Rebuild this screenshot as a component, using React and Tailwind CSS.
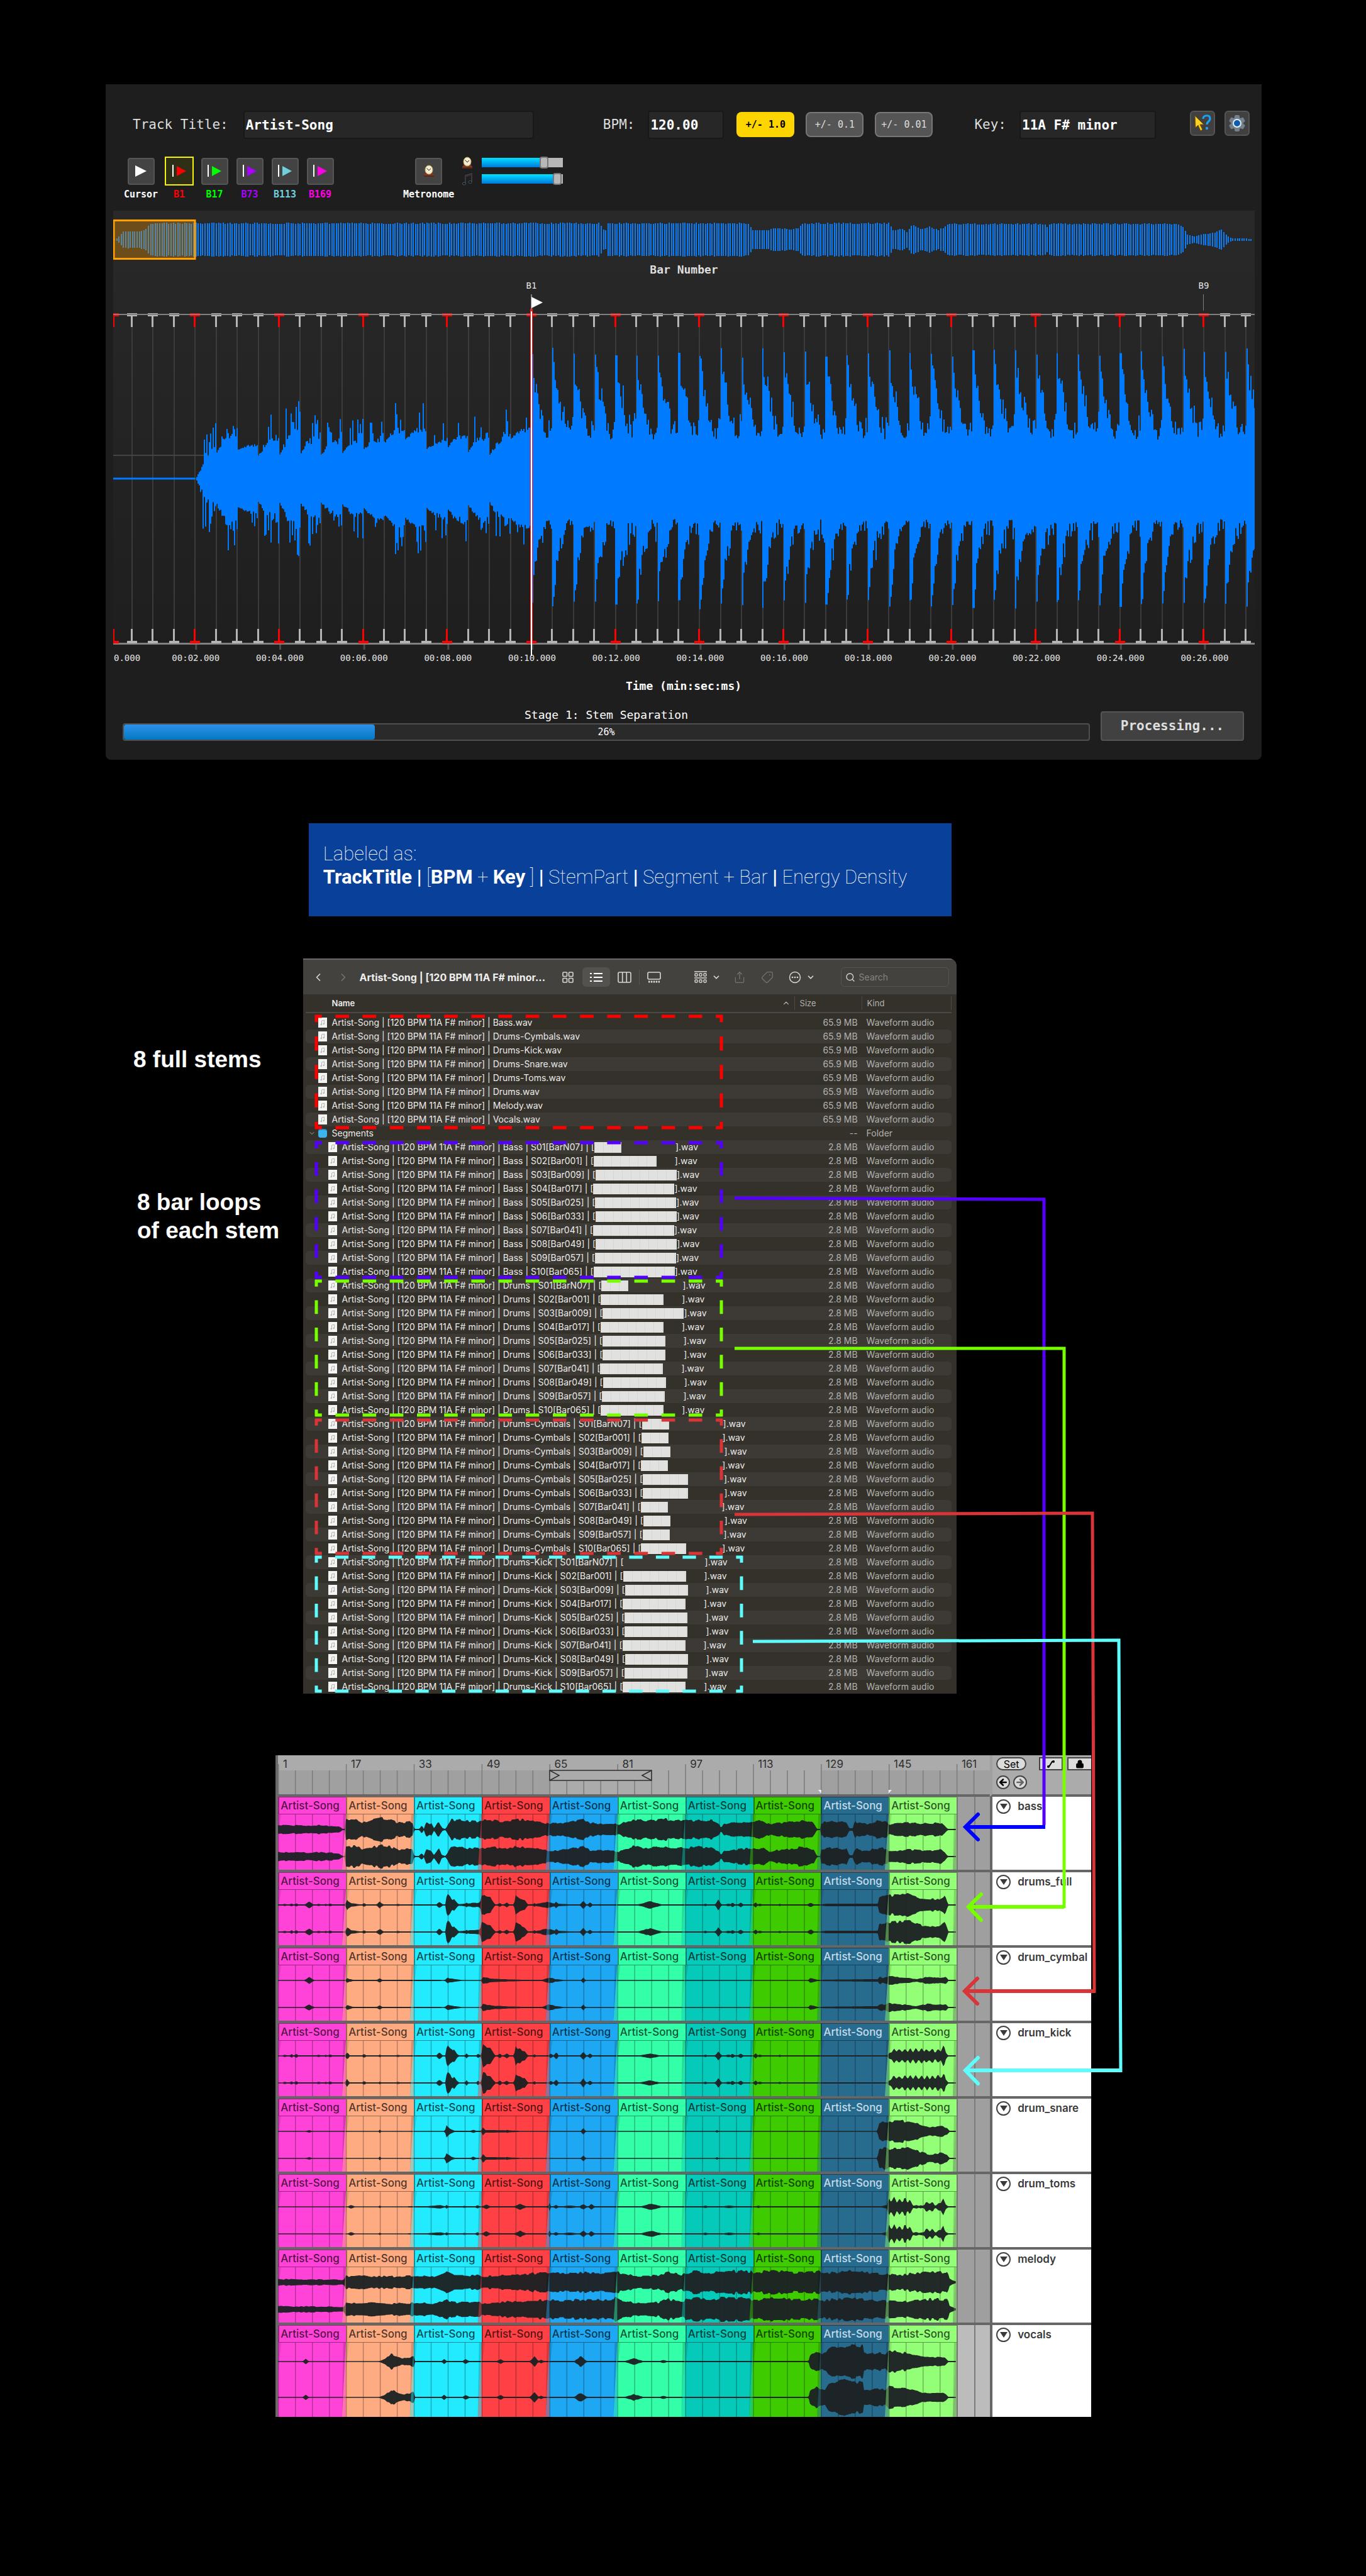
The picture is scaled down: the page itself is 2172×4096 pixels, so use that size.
import { ChevronLeft, ChevronRight, ChevronDown, ChevronUp, Search, Share, Tag, Lock, ArrowLeft, ArrowRight } from "lucide-react";

// Deterministic noise in 0..1 so the drawn waveforms never change between renders
const noise = (i) => {
  const v = Math.sin(i * 12.9898 + 4.1) * 43758.5453;
  return v - Math.floor(v);
};

const interpolate = (points, x) => {
  if (x <= points[0][0]) return points[0][1];
  for (let i = 1; i < points.length; i++) {
    const [x1, y1] = points[i];
    if (x <= x1) {
      const [x0, y0] = points[i - 1];
      return y0 + ((y1 - y0) * (x - x0)) / (x1 - x0);
    }
  }
  return points[points.length - 1][1];
};

const markers = [
  { label: "B1", box: "border-2 border-[#f5f500] bg-[#2f2e17] size-[46px]", text: "text-[#ff0000]", color: "#ff0000" },
  { label: "B17", box: "border-2 border-[#555] bg-[#434343] rounded size-[43px]", text: "text-[#00ff00]", color: "#00ff00" },
  { label: "B73", box: "border-2 border-[#555] bg-[#434343] rounded size-[43px]", text: "text-[#aa00ff]", color: "#aa00ff" },
  { label: "B113", box: "border-2 border-[#555] bg-[#434343] rounded size-[43px]", text: "text-[#6fd0dc]", color: "#6fd0dc" },
  { label: "B169", box: "border-2 border-[#555] bg-[#434343] rounded size-[43px]", text: "text-[#ff00e6]", color: "#ff00e6" },
];

/* ---------- Player ---------- */

function ClockIcon({ className }) {
  return (
    <svg viewBox="0 0 18 20" className={className} aria-hidden="true">
      <path d="M1 19v-3l2-2V8a6 6 0 0 1 12 0v6l2 2v3z" fill="#7a3b26" />
      <rect x="1" y="17" width="16" height="2" fill="#5a2718" />
      <ellipse cx="9" cy="8" rx="6" ry="7" fill="#f4ecd0" stroke="#c9a25a" strokeWidth="1" />
      <path d="M5.500 5.500 9 9l3-3" fill="none" stroke="#222" strokeWidth="1" />
    </svg>
  );
}

function NoteIcon({ className }) {
  return (
    <svg viewBox="0 0 18 20" className={className} aria-hidden="true">
      <path d="M6 17V4l10-3v13" fill="none" stroke="#3f474d" strokeWidth="1.500" />
      <path d="M6 6l10-3" stroke="#4a2b2b" strokeWidth="1.500" />
      <ellipse cx="4" cy="17" rx="2.600" ry="2" fill="#10161b" stroke="#4d5963" />
      <ellipse cx="13.500" cy="14.500" rx="2.600" ry="2" fill="#10161b" stroke="#4d5963" />
    </svg>
  );
}

function Volume({ label, value, icon }) {
  return (
    <label className="flex items-center gap-3.5 h-[15px]">
      {icon}
      <input
        type="range"
        aria-label={label}
        defaultValue={value}
        style={{ backgroundSize: `${value}% 100%` }}
        className="appearance-none w-[129px] h-[15px] bg-[#b7b7b7] bg-[linear-gradient(#00e1ff,#0078dc)] bg-no-repeat [&::-webkit-slider-thumb]:appearance-none [&::-webkit-slider-thumb]:w-3.5 [&::-webkit-slider-thumb]:h-[19px] [&::-webkit-slider-thumb]:rounded-sm [&::-webkit-slider-thumb]:border-2 [&::-webkit-slider-thumb]:border-[#777] [&::-webkit-slider-thumb]:bg-[#b8b8b8]"
      />
    </label>
  );
}

const OVERVIEW_ENVELOPE = [
  [0, 1], [6, 2], [10, 8], [16, 14], [36, 13], [50, 17], [54, 18], [56, 27], [774, 27], [777, 18],
  [782, 15], [785, 27], [1008, 27], [1016, 16], [1040, 15], [1048, 19], [1080, 17], [1090, 20], [1094, 27],
  [1232, 27], [1240, 15], [1252, 18], [1262, 13], [1270, 26], [1284, 16], [1296, 22], [1310, 16], [1324, 22],
  [1327, 26], [1480, 26], [1484, 20], [1488, 26], [1692, 26], [1700, 22], [1706, 9], [1718, 5], [1730, 9],
  [1745, 10], [1762, 17], [1770, 6], [1778, 2], [1815, 1.5],
];

function Overview() {
  const bars = [];
  for (let x = 1; x < 1810; x += 3.6) {
    const a = interpolate(OVERVIEW_ENVELOPE, x) * (1 - 0.08 * noise(x));
    bars.push(`M${Math.round(x)} ${(32 - a).toFixed(1)}h2v${(a * 2).toFixed(1)}h-2z`);
  }
  return (
    <svg viewBox="0 0 1815 64" className="block w-full h-auto">
      <path d={bars.join("")} fill="#0a7cf5" shapeRendering="crispEdges" />
      <rect x="1" y="1.500" width="129" height="61" fill="#ffa000" fillOpacity="0.32" stroke="#ffa000" strokeWidth="3" />
    </svg>
  );
}

const BEAT = 33.42;
const CURSOR_X = 664;
const INTRO = [
  [2, 83], [38, 120], [45, 75], [36, 95], [36, 113], [38, 100], [38, 87], [40, 88],
  [46, 90], [56, 113], [62, 113], [46, 88], [48, 100], [42, 100], [36, 104], [62, 113],
];
// Shape of one drum hit over a beat, as a share of its peak above the sustained level
const HIT = [
  [[0, 1], [0.06, 0.95], [0.12, 0.8], [0.27, 0.62], [0.4, 0.36], [0.6, 0.13], [0.8, 0.05], [1, 0.18]],
  [[0, 1], [0.06, 0.95], [0.14, 0.76], [0.27, 0.5], [0.4, 0.28], [0.6, 0.1], [0.8, 0.04], [1, 0.08]],
];

function buildWave(side) {
  const points = [];
  for (let x = 0; x <= 1815; x += 2) {
    const beat = (x - CURSOR_X) / BEAT;
    const n = noise(x + side * 977);
    let a;
    if (beat < -16) {
      a = 1.5;
    } else if (beat < 0) {
      const k = Math.floor(beat) + 16;
      const t = beat + 16 - k;
      const [low, high] = INTRO[k];
      a = low + (high * 0.74 - low) * Math.sin(Math.min(1, t * 1.2) * 1.57) * (0.55 + 0.6 * n);
      if (n > 0.74 && t > 0.3) a = high * (0.74 + 0.36 * noise(x * 3));
      if (k === 0) a *= Math.min(1, 0.1 + t * 2.2);
    } else {
      const k = Math.floor(beat);
      const t = beat - k;
      const peak = 192 + 16 * noise(k * 7 + side);
      const base = side ? 60 : 56;
      a = base + (peak - base) * interpolate(HIT[side], t) * (0.74 + 0.36 * n);
      a += (t > 0.35 ? 34 : 0) * n * n * (0.4 + 0.8 * noise(k + 3));
      if (t < 0.07) a = peak;
    }
    points.push({ x, y: (side ? 322 + a : 322 - a).toFixed(1) });
  }
  return `M0 322${points.map((p) => `V${p.y}H${p.x + 2}`).join("")}V322Z`;
}

function WavePlot() {
  const beats = [];
  for (let k = -20; k <= 34; k++) beats.push(k);

  return (
    <svg viewBox="0 0 1815 620" className="block w-full h-auto">
      {beats.map((k) => (
        <rect key={k} x={Math.round(CURSOR_X + k * BEAT)} y="81" width="2" height="480" fill="#3b3b3b" />
      ))}
      <rect x="0" y="284" width="1815" height="2" fill="#444" />
      <path d={buildWave(0)} fill="#007aff" />
      <path d={buildWave(1)} fill="#007aff" />
      <rect x="0" y="60" width="1815" height="2" fill="#808080" />
      <rect x="0" y="583" width="1815" height="3" fill="#808080" />
      {beats.map((k) => {
        const x = Math.max(0, Math.round(CURSOR_X + k * BEAT));
        const fill = k % 4 === 0 ? "#ff0000" : "#b4b4b4";
        return (
          <g key={k} fill={fill}>
            <rect x={x - 7} y="59" width="16" height="1" />
            <rect x={x - 7} y="62" width="16" height="2" />
            <rect x={x - 1} y="62" width="3" height="19" />
            <rect x={x - 1} y="561" width="3" height="21" />
            <rect x={x - 7} y="580" width="16" height="4" />
          </g>
        );
      })}
      {[-16, -12, -8, -4, 0, 4, 8, 12, 16, 20, 24, 28, 32].map((k) => (
        <g key={k}>
          <rect x={CURSOR_X + k * BEAT + 1} y="586" width="3" height="8" fill="#4a4a4a" />
          <text x={CURSOR_X + k * BEAT + 2} y="612" textAnchor="middle" fontSize="14" fill="#e4e4e4">
            {`00:${String(10 + k / 2).padStart(2, "0")}.000`}
          </text>
        </g>
      ))}
      <text x="1" y="612" fontSize="14" fill="#e4e4e4">0.000</text>
      <text x="665" y="20" textAnchor="middle" fontSize="14" fill="#e4e4e4">B1</text>
      <text x="1734" y="20" textAnchor="middle" fontSize="14" fill="#e4e4e4">B9</text>
      <rect x="664" y="29" width="2" height="26" fill="#808080" />
      <rect x="1733" y="29" width="1" height="26" fill="#808080" />
      <path d="M665 33l18 9-18 9z" fill="#fff" />
      <rect x="663" y="52" width="4" height="532" fill="#ff2020" />
      <rect x="664" y="56" width="2" height="548" fill="#fff" />
    </svg>
  );
}

function Player() {
  return (
    <section className="ml-[168px] mr-[166px] bg-[#1e1e1e] rounded-b-lg pt-[42px] pb-[30px] font-['DejaVu_Sans_Mono',monospace]">
      <div className="flex items-start pl-[43px] pr-[19px] text-[21px] text-[#dedede]">
        <label htmlFor="title" className="leading-[45px]">Track Title:</label>
        <input id="title" defaultValue="Artist-Song" className="ml-6 flex-1 min-w-0 h-[45px] pl-0.5 rounded bg-[#272727] border-2 border-[#181818] text-white font-bold" />
        <label htmlFor="bpm" className="ml-[110px] leading-[45px]">BPM:</label>
        <input id="bpm" defaultValue="120.00" className="ml-[21px] w-[121px] h-[45px] pl-0.5 rounded bg-[#272727] border-2 border-[#181818] text-white font-bold" />
        <div className="ml-5 mt-0.5 flex gap-[18px] text-[15px]">
          <button className="w-[92px] h-10 rounded-lg bg-[#ffd500] text-black font-bold">+/- 1.0</button>
          <button className="w-[92px] h-10 rounded-lg bg-[#555] border-2 border-[#777]">+/- 0.1</button>
          <button className="w-[92px] h-10 rounded-lg bg-[#555] border-2 border-[#777]">+/- 0.01</button>
        </div>
        <label htmlFor="key" className="ml-[66px] leading-[45px]">Key:</label>
        <input id="key" defaultValue="11A F# minor" className="ml-[21px] w-[217px] h-[45px] pl-0.5 rounded bg-[#272727] border-2 border-[#181818] text-white font-bold" />
        <button aria-label="Help" className="ml-[54px] size-10 rounded-md bg-[#404040] border-2 border-[#555] flex items-center justify-center">
          <svg viewBox="0 0 30 30" className="size-[30px]">
            <path d="M3 3l1 19 4-4 4 9 3-2-4-8 6 0z" fill="#ffd21f" stroke="#7a5200" strokeWidth="1" />
            <path d="M16 8c0-7 12-7 11 0 0 4-5 4-5 9" fill="none" stroke="#1aa0f5" strokeWidth="3.200" />
            <circle cx="22" cy="23" r="2.200" fill="#1aa0f5" />
          </svg>
        </button>
        <button aria-label="Settings" className="ml-[15px] size-10 rounded-md bg-[#404040] border-2 border-[#555] flex items-center justify-center">
          <svg viewBox="0 0 28 28" className="size-7">
            {[0, 60, 120].map((deg) => (
              <rect key={deg} x="10" y="1" width="8" height="26" rx="2" fill="#74828d" transform={`rotate(${deg} 14 14)`} />
            ))}
            <circle cx="14" cy="14" r="10" fill="#74828d" />
            <circle cx="14" cy="14" r="6" fill="#0e5cab" stroke="#e8eef2" strokeWidth="2" />
          </svg>
        </button>
      </div>

      <div className="mt-7 ml-7 flex items-start text-[15px] leading-5 font-bold">
        <div className="flex gap-2.5">
          <div className="w-14 flex flex-col items-center">
            <div className="h-[46px] flex items-center">
              <button aria-label="Cursor" className="size-[43px] rounded border-2 border-[#555] bg-[#434343] flex items-center justify-center">
                <svg viewBox="0 0 18 18" className="size-[18px]"><path d="M0 0l18 9-18 9z" fill="#fff" /></svg>
              </button>
            </div>
            <span className="mt-1 text-white">Cursor</span>
          </div>
          {markers.map((marker) => (
            <div key={marker.label} className="w-[46px] flex flex-col items-center">
              <div className="h-[46px] flex items-center">
                <button aria-label={marker.label} className={`${marker.box} flex items-center justify-center`}>
                  <svg viewBox="0 0 22 20" className="w-[22px] h-5">
                    <rect x="0" y="0" width="2" height="19" fill="#fff" />
                    <path d="M7 2l15 8-15 8z" fill={marker.color} />
                  </svg>
                </button>
              </div>
              <span className={`mt-1 ${marker.text}`}>{marker.label}</span>
            </div>
          ))}
        </div>
        <div className="ml-[109px] flex flex-col items-center">
          <div className="h-[46px] flex items-center">
            <button aria-label="Metronome" className="size-[43px] rounded border-2 border-[#555] bg-[#434343] flex items-center justify-center">
              <ClockIcon className="w-[18px] h-5" />
            </button>
          </div>
          <span className="mt-1 text-white">Metronome</span>
        </div>
        <div className="ml-3 mt-0.5 flex flex-col gap-[11px]">
          <Volume label="Metronome volume" value={80} icon={<ClockIcon className="w-[18px] h-5" />} />
          <Volume label="Song volume" value={98} icon={<NoteIcon className="w-[18px] h-5" />} />
        </div>
      </div>

      <div className="mt-4 ml-3 mr-[11px] pt-3.5 bg-linear-to-b from-[#292929] to-[#1e1e1e]">
        <Overview />
        <h2 className="mt-1.5 text-center text-lg leading-5 font-bold text-[#dedede]">Bar Number</h2>
        <WavePlot />
      </div>
      <p className="mt-5 text-center text-lg leading-6 font-bold text-white">Time (min:sec:ms)</p>

      <div className="mt-6 pl-[27px] pr-7 flex items-end gap-[17px]">
        <div className="flex-1">
          <p className="text-center text-lg leading-5 text-white">Stage 1: Stem Separation</p>
          <div className="relative mt-[3px] h-7 rounded border-2 border-[#4f4f4f] bg-[#2a2a2a]">
            <div className="h-full w-[26%] rounded-sm bg-linear-to-b from-[#2a92e8] to-[#0078c4]"></div>
            <span className="absolute inset-0 text-center text-[15px] leading-6 text-white">26%</span>
          </div>
        </div>
        <button className="w-[228px] h-[47px] rounded border-2 border-[#555] bg-[#414141] text-[21px] font-bold text-[#dedede]">Processing...</button>
      </div>
    </section>
  );
}

/* ---------- File browser ---------- */

const stems = ["Bass", "Drums-Cymbals", "Drums-Kick", "Drums-Snare", "Drums-Toms", "Drums", "Melody", "Vocals"];
const bars = ["BarN07", "Bar001", "Bar009", "Bar017", "Bar025", "Bar033", "Bar041", "Bar049", "Bar057", "Bar065"];
const segments = [
  { stem: "Bass", density: [3, 7, 9, 9, 9, 9, 9, 9, 9, 9] },
  { stem: "Drums", density: [3, 7, 9, 7, 7, 7, 7, 7, 7, 7] },
  { stem: "Drums-Cymbals", density: [3, 3, 3, 3, 5, 5, 3, 3, 3, 5] },
  { stem: "Drums-Kick", density: [0, 7, 7, 7, 7, 7, 7, 7, 7, 7] },
];
const densityWidth = { 0: "w-0", 3: "w-[43px]", 5: "w-[72px]", 7: "w-[100px]", 9: "w-[129px]" };

function FileIcon() {
  return (
    <svg viewBox="0 0 14 16" className="w-3.5 h-4 shrink-0" aria-hidden="true">
      <rect width="14" height="16" fill="#f4f4f2" />
      <path d="M5.500 11V5l4-1v6" fill="none" stroke="#b5b5b5" strokeWidth="1" />
      <circle cx="4.700" cy="11" r="1.200" fill="#b5b5b5" />
      <circle cx="8.700" cy="10" r="1.200" fill="#b5b5b5" />
    </svg>
  );
}

function FileRow({ striped, indent, size, kind, children }) {
  const bg = striped ? "bg-[#3d3a35]" : "";
  return (
    <tr>
      <td className={`p-0 h-[22px] rounded-l-md ${bg} ${indent ? "pl-9" : "pl-5"}`}>
        <div className="flex items-center gap-2 text-[#ebebe9] whitespace-pre">{children}</div>
      </td>
      <td className={`p-0 pr-1.5 text-right ${bg}`}>{size}</td>
      <td className={`p-0 pl-2 rounded-r-md ${bg}`}>{kind}</td>
    </tr>
  );
}

function Finder() {
  return (
    <section className="w-[47.84%] rounded-tr-xl overflow-hidden bg-[#34312b] font-[Inter,sans-serif]">
      <div className="h-[57px] border-t-2 border-[#6a6965] bg-[#43423e] flex items-center pl-3.5 pr-3 text-[#d8d8d5]">
        <button aria-label="Back"><ChevronLeft className="size-5" /></button>
        <button aria-label="Forward" className="ml-5 text-[#75746f]"><ChevronRight className="size-5" /></button>
        <h2 className="ml-4 w-[310px] text-base font-bold text-[#efefed] whitespace-nowrap">Artist-Song | [120 BPM 11A F# minor...</h2>
        <button aria-label="Icons" className="ml-3">
          <svg viewBox="0 0 18 18" className="size-[18px]" fill="none" stroke="currentColor" strokeWidth="1.600">
            <rect x="1" y="1" width="6.500" height="6.500" rx="1" /><rect x="10.500" y="1" width="6.500" height="6.500" rx="1" />
            <rect x="1" y="10.500" width="6.500" height="6.500" rx="1" /><rect x="10.500" y="10.500" width="6.500" height="6.500" rx="1" />
          </svg>
        </button>
        <button aria-label="List" className="ml-3.5 w-11 h-[31px] rounded-md bg-[#53524e] flex items-center justify-center text-white">
          <svg viewBox="0 0 20 16" className="w-5 h-4" stroke="currentColor" strokeWidth="2">
            <path d="M0 2h3M6 2h14M0 8h3M6 8h14M0 14h3M6 14h14" />
          </svg>
        </button>
        <button aria-label="Columns" className="ml-3">
          <svg viewBox="0 0 22 18" className="w-[22px] h-[18px]" fill="none" stroke="currentColor" strokeWidth="1.600">
            <rect x="1" y="1" width="20" height="16" rx="2" /><path d="M7.700 1v16M14.300 1v16" />
          </svg>
        </button>
        <span className="ml-3 w-px h-6 bg-[#55544f]"></span>
        <button aria-label="Gallery" className="ml-3">
          <svg viewBox="0 0 22 18" className="w-[22px] h-[18px]" fill="none" stroke="currentColor" strokeWidth="1.600">
            <rect x="1" y="1" width="20" height="11" rx="2" /><path d="M2 16h18" strokeWidth="3" strokeDasharray="2.500 1.400" />
          </svg>
        </button>
        <button aria-label="Group" className="ml-auto flex items-center gap-2">
          <svg viewBox="0 0 20 20" className="size-5" fill="none" stroke="currentColor" strokeWidth="1.400">
            <path d="M0 1h20M0 11h20" />
            {[1, 8, 15].map((x) => (
              <g key={x}><rect x={x} y="4" width="4" height="4" rx="1" /><rect x={x} y="14" width="4" height="4" rx="1" /></g>
            ))}
          </svg>
          <ChevronDown className="size-3.5" strokeWidth={3} />
        </button>
        <button aria-label="Share" className="ml-5 text-[#75746f]"><Share className="size-5" strokeWidth={1.5} /></button>
        <button aria-label="Tags" className="ml-6 text-[#75746f]"><Tag className="size-5 rotate-90" strokeWidth={1.5} /></button>
        <button aria-label="More" className="ml-6 flex items-center gap-2">
          <svg viewBox="0 0 20 20" className="size-5" fill="currentColor">
            <circle cx="10" cy="10" r="8.500" fill="none" stroke="currentColor" strokeWidth="1.500" />
            <circle cx="6" cy="10" r="1.300" /><circle cx="10" cy="10" r="1.300" /><circle cx="14" cy="10" r="1.300" />
          </svg>
          <ChevronDown className="size-3.5" strokeWidth={3} />
        </button>
        <label className="ml-[41px] w-[172px] h-[31px] rounded-md border border-[#55544f] flex items-center pl-1.5 gap-1.5">
          <Search className="size-4" />
          <input aria-label="Search" placeholder="Search" className="w-28 text-sm placeholder:text-[#85847f]" />
        </label>
      </div>

      <div className="pl-1 pr-2">
        <table className="w-full table-fixed border-separate border-spacing-0 text-sm leading-[22px] text-[#b3b2ae]">
          <thead>
            <tr className="text-left text-[13px]">
              <th className="p-0 h-[30px] pl-[42px] font-semibold text-[#ebebe9] border-b-2 border-[#4b4944]">
                <div className="flex items-center justify-between pr-1.5">Name <ChevronUp className="size-3.5 text-[#a9a8a4]" /></div>
              </th>
              <th className="p-0 w-[107px] font-normal border-b-2 border-[#4b4944]"><div className="pl-2 border-l border-[#4b4944]">Size</div></th>
              <th className="p-0 w-[143px] font-normal border-b-2 border-[#4b4944]"><div className="pl-2 border-x border-[#4b4944]">Kind</div></th>
            </tr>
            <tr><th className="p-0 h-1"></th></tr>
          </thead>
          <tbody>
            {stems.map((stem, idx) => (
              <FileRow key={stem} striped={idx % 2 === 1} size="65.9 MB" kind="Waveform audio">
                <FileIcon />
                <span>Artist-Song | [120 BPM 11A F# minor] | {stem}.wav</span>
              </FileRow>
            ))}
            <FileRow size="--" kind="Folder">
              <ChevronDown className="-ml-4 -mr-1 size-3 shrink-0 text-[#a9a8a4]" />
              <span className="w-3.5 h-3.5 shrink-0 rounded-sm bg-[#3cb4ec] border-t-2 border-[#1f8fc9]"></span>
              <span>Segments</span>
            </FileRow>
            {segments.map(({ stem, density }) =>
              bars.map((bar, idx) => (
                <FileRow key={stem + bar} striped={idx % 2 === 0} indent size="2.8 MB" kind="Waveform audio">
                  <FileIcon />
                  <span className="flex items-center">
                    Artist-Song | [120 BPM 11A F# minor] | {stem} | S{String(idx + 1).padStart(2, "0")}[{bar}] | [
                    <span className="w-[129px]">
                      <span className={`block h-[17px] bg-[#e1e1df] bg-[repeating-linear-gradient(90deg,#d6d6d4_0_1px,transparent_1px_14px)] ${densityWidth[density[idx]]}`}></span>
                    </span>
                    ].wav
                  </span>
                </FileRow>
              ))
            )}
          </tbody>
        </table>
      </div>
    </section>
  );
}

/* ---------- Arrangement ---------- */

const clips = [
  { bg: "bg-[#ff42d8]", fill: "#ff42d8" },
  { bg: "bg-[#ffab82]", fill: "#ffab82" },
  { bg: "bg-[#22ebff]", fill: "#22ebff" },
  { bg: "bg-[#ff4145]", fill: "#ff4145" },
  { bg: "bg-[#1ea7f2]", fill: "#1ea7f2" },
  { bg: "bg-[#33ffa9]", fill: "#33ffa9" },
  { bg: "bg-[#05c9b9]", fill: "#05c9b9" },
  { bg: "bg-[#3ecb00]", fill: "#3ecb00" },
  { bg: "bg-[#276c8f]", fill: "#276c8f", light: true },
  { bg: "bg-[#93ff76]", fill: "#93ff76" },
];

// Envelopes run over the ten clips (0..10); bumps are [centre, half width, height]
const kickBumps = [
  [0.1, 0.04, 2], [0.2, 0.03, 3], [0.27, 0.04, 3], [0.6, 0.05, 2], [0.7, 0.03, 2], [0.77, 0.03, 3], [1.02, 0.04, 6],
  [1.27, 0.04, 3], [1.5, 0.03, 2], [1.77, 0.03, 2], [2.38, 0.05, 6], [2.59, 0.08, 10], [2.78, 0.03, 4], [2.95, 0.03, 4],
  [3.27, 0.04, 4], [3.37, 0.05, 4], [3.78, 0.03, 3], [4.02, 0.04, 4], [4.1, 0.04, 6], [4.5, 0.05, 7], [4.6, 0.04, 4],
  [4.75, 0.03, 1.5], [5.48, 0.18, 4], [6.3, 0.04, 2], [6.49, 0.05, 8], [6.64, 0.08, 2], [6.7, 0.04, 4], [6.82, 0.05, 4],
  [7.04, 0.03, 5], [7.1, 0.05, 2], [7.4, 0.03, 2], [7.52, 0.05, 1], [8.35, 0.04, 1],
];
const kickHits = [
  [2.47, 1], [2.49, 18], [2.53, 14], [2.6, 4], [2.66, 1], [3, 1], [3.01, 18], [3.08, 13], [3.13, 12], [3.18, 4], [3.2, 1],
  [3.48, 1], [3.5, 15], [3.56, 11], [3.64, 7], [3.68, 1],
];

const tracks = [
  {
    name: "bass",
    points: [
      [0, 7], [0.5, 6], [0.6, 7], [0.9, 5], [0.95, 1], [0.99, 1], [1, 16], [1.15, 16], [1.25, 11], [1.5, 18], [1.65, 16],
      [1.75, 11], [1.98, 12], [2.01, 1], [2.08, 1], [2.12, 6], [2.15, 1], [2.18, 11], [2.26, 9], [2.3, 2], [2.37, 12],
      [2.42, 2], [2.47, 1], [2.55, 16], [2.7, 15], [2.85, 13], [2.97, 13], [3, 14], [3.2, 15], [3.3, 12], [3.6, 16],
      [3.8, 13], [3.97, 10], [4, 9], [4.3, 12], [4.5, 16], [4.6, 10], [4.97, 9], [5.02, 7], [5.1, 12], [5.3, 17],
      [5.4, 13], [5.7, 17], [5.85, 14], [6, 14], [6.2, 15], [6.4, 14], [6.5, 9], [6.53, 3], [6.57, 9], [6.8, 12],
      [6.98, 13], [7.15, 14], [7.25, 8], [7.5, 12], [7.75, 15], [7.9, 11], [7.94, 1], [7.99, 1], [8, 10], [8.15, 14],
      [8.38, 12], [8.42, 2], [8.47, 2], [8.5, 12], [8.7, 9], [8.8, 13], [8.97, 13], [9, 8], [9.3, 11], [9.6, 9],
      [9.78, 11], [9.87, 1], [10, 1],
    ],
    bumps: [],
  },
  {
    name: "drums_full",
    points: [
      [0, 1], [1, 1], [1.01, 8], [1.08, 3], [1.2, 1], ...kickHits.slice(0, 5), [2.7, 1.5], [2.98, 4], [3, 18],
      ...kickHits.slice(6), [3.8, 1.5], [3.95, 5], [4.1, 2], [4.3, 1], [8, 1], [8.1, 2], [8.84, 2], [8.86, 11], [8.95, 16],
      [9, 15], [9.3, 17], [9.5, 10], [9.75, 9], [9.83, 15], [9.88, 1], [10, 1],
    ],
    bumps: [...kickBumps, [0.46, 0.07, 6], [1.5, 0.06, 5], [5.48, 0.2, 6], [7.85, 0.06, 4]],
  },
  {
    name: "drum_cymbal",
    points: [
      [0, 0.8], [1, 0.8], [1.01, 4], [1.1, 1], [2.46, 0.8], [2.5, 4], [2.6, 2], [2.7, 0.8], [3, 0.8], [3.01, 6], [3.15, 3],
      [3.4, 1.5], [3.6, 1], [3.9, 1], [4, 5], [4.1, 2], [4.2, 0.8], [7.82, 0.8], [7.84, 4], [7.95, 1], [8.84, 2], [8.87, 6],
      [8.92, 4], [9, 7], [9.15, 5], [9.3, 4], [9.4, 2], [9.6, 6], [9.7, 4], [9.85, 5], [9.88, 1], [10, 1],
    ],
    bumps: [[0.46, 0.08, 5], [1.5, 0.06, 3], [4.5, 0.03, 6]],
  },
  {
    name: "drum_kick",
    ripple: true,
    points: [[0, 0.8], ...kickHits, [8.75, 1], [8.98, 1], [9, 3], [9.05, 11], [9.7, 10], [9.78, 12], [9.82, 16], [9.87, 1], [10, 1]],
    bumps: kickBumps,
  },
  {
    name: "drum_snare",
    points: [
      [0, 0.8], [2.46, 0.8], [2.48, 9], [2.53, 4], [2.6, 1], [3, 1], [3.01, 8], [3.06, 2], [3.4, 1.5], [3.55, 0.8], [8.83, 0.8],
      [8.86, 13], [8.93, 17], [9, 15], [9.3, 17], [9.45, 11], [9.6, 6], [9.78, 9], [9.87, 5], [9.89, 1], [10, 1],
    ],
    bumps: [[0.46, 0.06, 2], [1.5, 0.02, 3], [2.88, 0.05, 3], [3.38, 0.05, 3], [4.5, 0.04, 5], [6.47, 0.03, 2]],
  },
  {
    name: "drum_toms",
    ripple: true,
    points: [
      [0, 0.6], [1.9, 0.8], [2.2, 1], [2.4, 2.5], [2.45, 1], [4, 1], [8.9, 1], [8.98, 3], [9, 15], [9.15, 12], [9.3, 13],
      [9.36, 3], [9.5, 2], [9.55, 8], [9.65, 7], [9.7, 3], [9.8, 12], [9.87, 1], [10, 1],
    ],
    bumps: [
      [1.08, 0.06, 3], [1.5, 0.02, 2], [2.49, 0.02, 4], [2.75, 0.03, 2], [2.94, 0.03, 3], [3.07, 0.07, 4], [3.57, 0.1, 5],
      [4, 0.02, 7], [4.1, 0.05, 3], [4.3, 0.2, 2], [4.5, 0.06, 5], [4.62, 0.05, 5], [5.5, 0.18, 5], [6.3, 0.05, 2], [6.65, 0.15, 2], [7.08, 0.05, 2],
    ],
  },
  {
    name: "melody",
    points: [
      [0, 5], [0.97, 4], [1, 10], [1.4, 10], [1.6, 9], [1.97, 10], [2.05, 11], [2.3, 9], [2.48, 16], [2.6, 11], [2.97, 11],
      [3, 9], [3.4, 12], [3.97, 15], [4, 14], [4.4, 15], [4.8, 15], [4.98, 18], [5, 16], [5.25, 10], [5.6, 11], [5.75, 16],
      [5.95, 12], [6, 15], [6.2, 18], [6.35, 13], [6.5, 18], [6.97, 17], [7, 14], [7.2, 18], [7.7, 15], [7.98, 17], [8, 14],
      [8.4, 18], [8.9, 13], [9, 13], [9.2, 12], [9.5, 16], [9.87, 16], [9.9, 5], [10, 1],
    ],
    bumps: [],
  },
  {
    name: "vocals",
    points: [
      [0, 0.8], [1.5, 0.8], [1.58, 4], [1.67, 12], [1.75, 8], [1.85, 5], [1.96, 7], [2, 9], [2.02, 1], [7.82, 1], [7.84, 10],
      [7.92, 16], [8, 13], [8.09, 14], [8.12, 23], [8.3, 26], [8.62, 24], [8.63, 13], [8.97, 13], [9, 17], [9.3, 13], [9.5, 7],
      [9.83, 7], [9.88, 1], [10, 1],
    ],
    bumps: [
      [0.41, 0.05, 4], [2.45, 0.04, 5], [2.77, 0.06, 4], [3.28, 0.06, 4], [3.78, 0.07, 8], [3.88, 0.05, 3], [4.46, 0.1, 8],
      [5.25, 0.16, 5], [5.68, 0.08, 2.5],
    ],
  },
];

function channelPath({ points, bumps, ripple }, centre, seed) {
  const upper = [];
  const lower = [];
  for (let x = 0; x <= 1079; x += 2) {
    const u = x / 107.9;
    let a = interpolate(points, u);
    bumps.forEach(([c, w, h]) => {
      a = Math.max(a, h * (1 - Math.abs(u - c) / w));
    });
    let wobble = a > 2 ? 0.82 + 0.26 * noise(Math.floor(x / 4) + seed) : 1;
    if (ripple && u > 9 && a > 2) wobble *= 0.84 + 0.24 * Math.sin(x * 0.72);
    const y = Math.max(0.8, a * wobble * 1.05);
    upper.push(`${x} ${(centre - y).toFixed(1)}`);
    lower.unshift(`${x} ${(centre + y).toFixed(1)}`);
  }
  return `M${upper.join("L")}L${lower.join("L")}Z`;
}

function TrackLane({ track, index }) {
  const last = index === tracks.length - 1;
  const height = last ? 118 : 88;
  const centres = last ? [30, 87] : [24, 67];
  return (
    <div className="flex-1 min-w-0">
      <div className="grid grid-cols-10">
        {clips.map((clip) => (
          <div
            key={clip.fill}
            className={`h-7 pl-0.5 border-l-2 border-y border-black/40 text-[17px] leading-[26px] font-medium whitespace-nowrap overflow-hidden ${clip.bg} ${clip.light ? "text-[#c5dbe8]" : "text-black/70"}`}
          >
            Artist-Song
          </div>
        ))}
      </div>
      <svg viewBox={`0 0 1079 ${height}`} preserveAspectRatio="none" className={`block w-full ${last ? "h-[118px]" : "h-[88px]"}`}>
        {clips.map((clip, i) => {
          const x = i * 107.9;
          return (
            <g key={clip.fill}>
              <rect x={x} width="108.400" height={height} fill={clip.fill} />
              <path d={`M${x} 0h5L${x} ${height * 0.4}z`} fill="#000" fillOpacity="0.1" />
              {[0, 27, 54, 81].map((dx) => (
                <rect key={dx} x={x + dx} width="1.500" height={height} fill="#000" fillOpacity="0.28" />
              ))}
            </g>
          );
        })}
        {centres.map((c, i) => (
          <path key={c} d={channelPath(track, c, index * 500 + i * 31)} fill="#1d2123" fillOpacity="0.96" />
        ))}
        {clips.map((clip, i) => {
          const x = (i + 1) * 107.9;
          const next = clips[i + 1] ? clips[i + 1].fill : "#6a6a6a";
          return (
            <g key={clip.fill}>
              <path d={`M${x - 4} 0H${x}L${x - 6} ${height}z`} fill="#000" fillOpacity="0.16" />
              <path d={`M${x} 0V${height}h-6z`} fill={next} fillOpacity="0.45" />
            </g>
          );
        })}
      </svg>
    </div>
  );
}

function Ruler() {
  const ticks = [];
  for (let i = 0; i <= 42; i++) ticks.push(i);
  return (
    <svg viewBox="0 0 1132 66" className="block flex-1 min-w-0 bg-[#ababab]">
      <rect x="0" y="24" width="432" height="38" fill="#a0a0a0" />
      <rect x="863" y="24" width="269" height="38" fill="#a0a0a0" />
      {ticks.map((i) => (
        <rect key={i} x={i * 26.975} y={i % 4 === 0 ? 14 : 24} width="1.500" height={i % 4 === 0 ? 48 : 38} fill="#7b7b7b" />
      ))}
      {[1, 17, 33, 49, 65, 81, 97, 113, 129, 145, 161].map((n, i) => (
        <text key={n} x={i * 107.9 + 8} y="20" fontSize="17" fill="#2e2e2e">{n}</text>
      ))}
      <path d="M432 24h162v16H432z" fill="#ababab" stroke="#2e2e2e" strokeWidth="1.500" />
      <path d="M432 24l15 8-15 8M594 24l-15 8 15 8" fill="none" stroke="#2e2e2e" strokeWidth="1.500" />
      <path d="M859 55h5v6zM976 55h-5v6z" fill="#dff4fb" />
      <rect x="0" y="62" width="1132" height="4" fill="#666" />
    </svg>
  );
}

function Arrangement() {
  return (
    <section className="mt-[98px] ml-[20.18%] w-[59.71%] border-l-4 border-[#6a6a6a] font-[Inter,sans-serif]">
      <div className="flex">
        <Ruler />
        <div className="w-[161px] h-[66px] pt-[3px] pl-1.5 border-l-4 border-b-4 border-l-[#a0a0a0] border-b-[#666] bg-[#ababab]">
          <div className="flex">
            <button className="w-12 h-[21px] rounded-full border-2 border-[#444] bg-[#dcdcdc] text-base leading-4 text-black">Set</button>
            <button aria-label="Automation" className="ml-5 w-[38px] h-[21px] border-2 border-[#444] bg-[#dcdcdc] flex items-center justify-center">
              <svg viewBox="0 0 14 12" className="w-3.5 h-3"><path d="M2 10h2l5-8h3" fill="none" stroke="#000" strokeWidth="2" /><circle cx="3" cy="10" r="2" /><circle cx="11" cy="2" r="2" /></svg>
            </button>
            <button aria-label="Lock" className="ml-[7px] flex-1 h-[21px] border-2 border-r-0 border-[#444] bg-[#dcdcdc] flex items-center justify-center">
              <Lock className="size-3.5 text-black" fill="#000" strokeWidth={2} />
            </button>
          </div>
          <div className="mt-2 flex gap-[5px]">
            <button aria-label="Previous" className="size-[22px] rounded-full border-2 border-[#444] bg-[#dcdcdc] flex items-center justify-center"><ArrowLeft className="size-4" strokeWidth={4} /></button>
            <button aria-label="Next" className="size-[22px] rounded-full border-2 border-[#444] bg-[#dcdcdc] flex items-center justify-center text-[#666]"><ArrowRight className="size-4" strokeWidth={4} /></button>
          </div>
        </div>
      </div>
      {tracks.map((track, index) => {
        const last = index === tracks.length - 1;
        return (
          <div key={track.name} className={`flex bg-white ${last ? "" : "border-b-4 border-[#666]"}`}>
            <TrackLane track={track} index={index} />
            <div className={`w-[53px] border-l-2 border-[#777] pl-[26px] ${last ? "bg-[#bcbcbc]" : "bg-[#9f9f9f]"}`}>
              <div className="h-full border-l-2 border-[#7b7b7b]"></div>
            </div>
            <div className="w-[161px] border-l-4 border-[#666] pl-1.5 pt-1 flex items-start gap-[11px]">
              <button aria-label={`Fold ${track.name}`} className="size-[23px] shrink-0 rounded-full border-2 border-[#444] flex items-center justify-center">
                <svg viewBox="0 0 12 9" className="w-3 h-[9px]"><path d="M0 0h12L6 9z" fill="#3a3a3a" /></svg>
              </button>
              <span className="text-[17px] leading-[22px] font-semibold text-[#3a3a3a]">{track.name}</span>
            </div>
          </div>
        );
      })}
    </section>
  );
}

/* ---------- Annotations ---------- */

const frames = [
  { x: 503, y: 1617, w: 644, h: 177, color: "#ff0000" },
  { x: 503, y: 1818, w: 644, h: 214, color: "#5500ff" },
  { x: 503, y: 2038, w: 644, h: 213, color: "#77ff00" },
  { x: 503, y: 2259, w: 644, h: 212, color: "#d93438" },
  { x: 503, y: 2477, w: 676, h: 213, color: "#5ffcfd" },
];

function DashedSide({ x1, y1, x2, y2, color }) {
  const length = Math.abs(x2 - x1) + Math.abs(y2 - y1);
  const pitch = length / Math.round(length / 43);
  return (
    <line x1={x1} y1={y1} x2={x2} y2={y2} stroke={color} strokeWidth="5" strokeDasharray={`${pitch / 2} ${pitch / 2}`} strokeDashoffset={pitch / 4} />
  );
}

function Annotations() {
  return (
    <svg viewBox="0 1525 2172 2319" preserveAspectRatio="none" className="absolute inset-0 size-full pointer-events-none" fill="none" strokeWidth="5">
      {frames.map(({ x, y, w, h, color }) => (
        <g key={color}>
          <DashedSide x1={x - 2} y1={y} x2={x + w + 2} y2={y} color={color} />
          <DashedSide x1={x - 2} y1={y + h} x2={x + w + 2} y2={y + h} color={color} />
          <DashedSide x1={x} y1={y - 2} x2={x} y2={y + h + 2} color={color} />
          <DashedSide x1={x + w} y1={y - 2} x2={x + w} y2={y + h + 2} color={color} />
        </g>
      ))}
      <path d="M1168 1906L1660 1908V2903" stroke="#5500ff" />
      <path d="M1168 2145H1692V3035" stroke="#77ff00" />
      <path d="M1168 2409L1737 2407L1740 3169" stroke="#d93438" />
      <path d="M1197 2611L1779 2609L1782 3296" stroke="#5ffcfd" />
      <g strokeWidth="6">
        <path d="M1662 2906H1535" stroke="#0000ff" />
        <path d="M1555 2886L1535 2906L1555 2926" stroke="#0000ff" strokeLinecap="round" />
        <path d="M1692 3033H1540" stroke="#77ff00" />
        <path d="M1560 3013L1540 3033L1560 3054" stroke="#77ff00" strokeLinecap="round" />
        <path d="M1742 3167H1534" stroke="#d93438" />
        <path d="M1554 3147L1534 3167L1554 3187" stroke="#d93438" strokeLinecap="round" />
        <path d="M1781 3293H1535" stroke="#5ffcfd" />
        <path d="M1555 3273L1535 3293L1555 3314" stroke="#5ffcfd" strokeLinecap="round" />
      </g>
    </svg>
  );
}

export default function App() {
  return (
    <main className="min-h-screen bg-black pt-[134px] pb-[251px]">
      <Player />

      <section className="mt-[101px] ml-[22.6%] w-[47.05%] bg-[#09409a] pl-[23px] pt-[30px] pb-11 text-[31px] leading-[37px] font-thin text-white font-[Roboto,sans-serif] whitespace-nowrap">
        <p>Labeled as:</p>
        <p>
          <b className="font-bold">TrackTitle |</b> [<b className="font-bold">BPM</b> + <b className="font-bold">Key</b> ] <b className="font-bold">|</b> StemPart <b className="font-bold">|</b> Segment + Bar <b className="font-bold">|</b> Energy Density
        </p>
      </section>

      <div className="relative mt-[67px]">
        <div className="flex">
          <aside className="w-[22.17%] pt-[138px] text-[37px] leading-[45px] font-bold text-white font-['Liberation_Sans',sans-serif]">
            <p className="pl-[212px] whitespace-nowrap">8 full stems</p>
            <p className="mt-[182px] pl-[218px] whitespace-nowrap">8 bar loops<br />of each stem</p>
          </aside>
          <Finder />
        </div>
        <Arrangement />
        <Annotations />
      </div>
    </main>
  );
}
